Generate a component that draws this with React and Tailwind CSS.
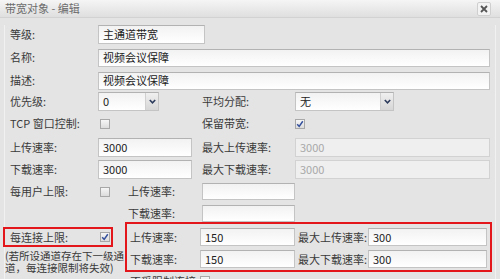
import React from 'react';

const font = { fontFamily: '"Noto Sans CJK SC", "Liberation Sans", sans-serif' };

const Field = ({ className = '', disabled, children }) => (
  <div
    className={
      'flex items-center pl-[4px] border ' +
      (disabled
        ? 'border-[#d2d2d2] bg-[#efefef] text-[#a9a9a9] '
        : 'border-[#c4c4c4] border-t-[#b2b2b2] bg-linear-to-b from-[#f2f2f2] to-white text-[#222] ') +
      className
    }
  >
    {children}
  </div>
);

const Select = ({ className = '', value }) => (
  <div className={'flex h-[19px] border border-[#c4c4c4] border-t-[#b2b2b2] ' + className}>
    <div className="flex-1 flex items-center pl-[4px] bg-linear-to-b from-[#f2f2f2] to-white text-[#222]">{value}</div>
    <div className="w-[13px] flex items-center justify-center border-l border-[#d0d0d0] bg-linear-to-b from-[#f0f0f0] to-[#d6d6d6]">
      <svg width="7" height="5" viewBox="0 0 7 5">
        <polyline points="0.8,1 3.5,3.8 6.2,1" fill="none" stroke="#2d3b5c" strokeWidth="1.6" />
      </svg>
    </div>
  </div>
);

const Check = ({ checked }) => (
  <div className="w-[10px] h-[10px] border border-[#a8a8a8] bg-linear-to-b from-[#f6f6f6] to-[#dcdcdc] flex items-center justify-center">
    {checked && (
      <svg width="8" height="8" viewBox="0 0 8 8">
        <polyline points="1.2,4.2 3.2,6.4 6.8,1.2" fill="none" stroke="#34509c" strokeWidth="1.5" />
      </svg>
    )}
  </div>
);

const Label = ({ className = '', children }) => (
  <div className={'shrink-0 text-[#3a3a3a] whitespace-nowrap ' + className}>{children}</div>
);

export default function App() {
  return (
    <div className="w-[500px] h-[279px] overflow-hidden bg-[#e4e4e4] text-[11px] leading-none" style={font}>
      <div className="h-[18px] flex items-center justify-between pl-[5px] pr-[9px] bg-linear-to-b from-[#f5f5f5] to-[#dfdfdf] border-b border-[#d2d2d2]">
        <span className="text-[#6c6c6c]">带宽对象 - 编辑</span>
        <span className="w-[14px] h-[14px] flex items-center justify-center border border-[#cfcfcf] bg-[#f3f3f3] rounded-[2px]">
          <svg width="8" height="8" viewBox="0 0 8 8">
            <path d="M1 1 L7 7 M7 1 L1 7" stroke="#555" strokeWidth="1.8" />
          </svg>
        </span>
      </div>

      <div className="ml-[4px] mr-[4px] h-full border-l border-r border-[#f1f1f1] pl-[5px]">
        <div className="mt-[7px] h-[19px] flex items-center">
          <Label className="w-[88px]">等级:</Label>
          <Field className="w-[107px] h-[19px]">主通道带宽</Field>
        </div>
        <div className="mt-[4px] h-[19px] flex items-center">
          <Label className="w-[88px]">名称:</Label>
          <Field className="w-[392px] h-[18px]">视频会议保障</Field>
        </div>
        <div className="mt-[4px] h-[19px] flex items-center">
          <Label className="w-[88px]">描述:</Label>
          <Field className="w-[392px] h-[18px]">视频会议保障</Field>
        </div>
        <div className="mt-[2px] h-[19px] flex items-center">
          <Label className="w-[88px]">优先级:</Label>
          <div className="w-[104px]">
            <Select className="w-[61px]" value="0" />
          </div>
          <Label className="w-[93px]">平均分配:</Label>
          <Select className="w-[99px]" value="无" />
        </div>
        <div className="mt-[3px] h-[19px] flex items-center">
          <Label className="w-[88px]">TCP 窗口控制:</Label>
          <div className="w-[104px] pl-[2px]">
            <Check />
          </div>
          <Label className="w-[93px]">保留带宽:</Label>
          <Check checked />
        </div>
        <div className="mt-[5px] h-[19px] flex items-center">
          <Label className="w-[88px]">上传速率:</Label>
          <div className="w-[104px]">
            <Field className="w-[94px] h-[19px]">3000</Field>
          </div>
          <Label className="w-[93px]">最大上传速率:</Label>
          <Field disabled className="w-[195px] h-[19px]">3000</Field>
        </div>
        <div className="mt-[3px] h-[19px] flex items-center">
          <Label className="w-[88px]">下载速率:</Label>
          <div className="w-[104px]">
            <Field className="w-[94px] h-[19px]">3000</Field>
          </div>
          <Label className="w-[93px]">最大下载速率:</Label>
          <Field disabled className="w-[195px] h-[19px]">3000</Field>
        </div>

        <div className="mt-[4px] flex">
          <div className="w-[115px] shrink-0">
            <div className="h-[17px] flex items-center">
              <Label className="w-[88px]">每用户上限:</Label>
              <div className="pl-[2px]">
                <Check />
              </div>
            </div>
            <div className="mt-[27px] -ml-[7px] w-[110px] h-[20px] border-2 border-[#e3161b] flex items-center pl-[5px]">
              <Label className="w-[88px]">每连接上限:</Label>
              <div className="pl-[2px]">
                <Check checked />
              </div>
            </div>
            <div className="mt-[3px] -ml-[5px] text-[10.5px] leading-[12px] text-[#3a3a3a] whitespace-nowrap">
              <div>(若所设通道存在下一级通</div>
              <div>道，每连接限制将失效)</div>
            </div>
          </div>

          <div className="w-[367px] shrink-0">
            <div className="h-[17px] flex items-center">
              <Label className="w-[77px] pl-[3px]">上传速率:</Label>
              <Field className="w-[93px] h-[17px]" />
            </div>
            <div className="mt-[5px] h-[17px] flex items-center">
              <Label className="w-[77px] pl-[3px]">下载速率:</Label>
              <Field className="w-[93px] h-[17px]" />
            </div>
            <div className="h-[50px] border-2 border-[#e3161b] pt-[4px]">
              <div className="h-[18px] flex items-center">
                <Label className="w-[73px] pl-[3px]">上传速率:</Label>
                <Field className="w-[95px] h-[18px]">150</Field>
                <Label className="w-[73px] pl-[3px]">最大上传速率:</Label>
                <Field className="w-[119px] h-[18px]">300</Field>
              </div>
              <div className="mt-[4px] h-[18px] flex items-center">
                <Label className="w-[73px] pl-[3px]">下载速率:</Label>
                <Field className="w-[95px] h-[18px]">150</Field>
                <Label className="w-[73px] pl-[3px]">最大下载速率:</Label>
                <Field className="w-[119px] h-[18px]">300</Field>
              </div>
            </div>
            <div className="mt-[3px] h-[12px] flex items-center">
              <Label className="w-[75px] pl-[5px]">不受限制连接</Label>
              <Check />
            </div>
          </div>
        </div>
      </div>
    </div>
  );
}
